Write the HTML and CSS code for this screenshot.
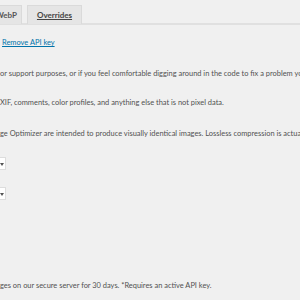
FILE: index.html
```html
<!DOCTYPE html>
<html>
<head>
<meta charset="utf-8">
<link rel="stylesheet" href="styles.css">
</head>
<body>
<div class="page">
  <nav class="tabs">
    <a class="tab tab-webp">WebP</a>
    <a class="tab tab-over">Overrides</a>
  </nav>
  <div class="apikey"><a href="#">Remove API key</a></div>
  <p class="row r1">or support purposes, or if you feel comfortable digging around in the code to fix a problem you are experiencing.</p>
  <p class="row r2">XIF, comments, color profiles, and anything else that is not pixel data.</p>
  <p class="row r3">ge Optimizer are intended to produce visually identical images. Lossless compression is actually identical.</p>
  <div class="sel s1"><span class="arrow"></span></div>
  <div class="sel s2"><span class="arrow"></span></div>
  <p class="row r4">ges on our secure server for 30 days. *Requires an active API key.</p>
</div>
</body>
</html>
```
FILE: styles.css
```css
html, body { margin: 0; padding: 0; }
body {
  background: #f0f0f0;
  font-family: Lato, "Open Sans", sans-serif;
  font-size: 7.45px;
  color: #505050;
  width: 300px;
  height: 300px;
  overflow: hidden;
}
.page { width: 600px; }
.tabs {
  display: flex;
  gap: 5px;
  padding-top: 5px;
  margin-left: -22px;
  border-bottom: 2px solid #e0e0e0;
  height: 18px;
}
.tab {
  display: block;
  box-sizing: border-box;
  height: 19px;
  background: #e5e5e5;
  border: 1px solid #dadada;
  border-bottom: none;
  font-weight: 700;
  font-size: 8px;
  color: #555;
  line-height: 18px;
  padding: 0 10px;
}
.tab-webp { width: 44px; text-align: right; padding-right: 4px; }
.tab-over { width: 55px; text-align: center; padding: 0; text-decoration: underline; color: #444; }
.apikey { margin-top: 12px; line-height: 12px; padding-left: 2px; }
.apikey a { color: #0073aa; text-decoration: underline; }
.row { margin: 0; white-space: nowrap; line-height: 12px; }
.r1 { margin-top: 19px; }
.r2 { margin-top: 17px; }
.r3 { margin-top: 19px; }
.r4 { margin-top: 80px; }
.sel {
  width: 6px;
  height: 13px;
  box-sizing: border-box;
  background: #fff;
  border: 1px solid #ddd;
  border-left: none;
  position: relative;
}
.s1 { margin-top: 17px; }
.s2 { margin-top: 17px; }
.arrow {
  position: absolute;
  left: 0;
  top: 5px;
  border-left: 2px solid transparent;
  border-right: 2px solid transparent;
  border-top: 3px solid #555;
}
```
